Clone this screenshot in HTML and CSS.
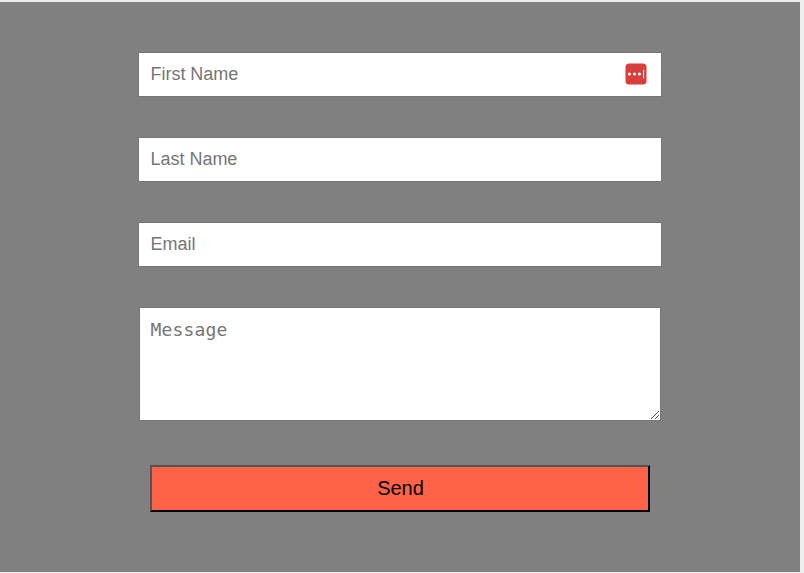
FILE: index.html
```html
<!DOCTYPE html>
<html lang="en">
<head>
  <meta charset="utf-8">
  <title>Contact</title>
  <link rel="stylesheet" href="styles.css">
</head>
<body>
  <form class="contact">
    <div class="field">
      <input class="input" type="text" placeholder="First Name">
      <svg class="badge" width="22" height="22" viewBox="0 0 22 22" aria-hidden="true">
        <rect x="0.5" y="0.5" width="21" height="21" rx="3.5" fill="#d93e3b"/>
        <circle cx="4.4" cy="11" r="1.6" fill="#fff"/>
        <circle cx="9.4" cy="11" r="1.6" fill="#fff"/>
        <circle cx="14.4" cy="11" r="1.6" fill="#fff"/>
        <rect x="18" y="6.8" width="1.1" height="8.6" rx="0.4" fill="#fff"/>
      </svg>
    </div>
    <input class="input" type="text" placeholder="Last Name">
    <input class="input" type="text" placeholder="Email">
    <div class="field-message">
      <textarea class="message" placeholder="Message"></textarea>
      <svg class="grip" width="10" height="10" viewBox="0 0 10 10" aria-hidden="true">
        <path d="M1 9 9 1M5 9 9 5" fill="none" stroke="#555" stroke-width="1"/>
      </svg>
    </div>
    <button class="send" type="button">Send</button>
  </form>
</body>
</html>
```
FILE: styles.css
```css
* {
  box-sizing: border-box;
}

body {
  margin: 0;
  padding-top: 2px;
  background: #eee;
  overflow: hidden;
}

.contact {
  display: flex;
  flex-direction: column;
  align-items: center;
  gap: 40px;
  width: 800px;
  height: 570px;
  padding-top: 50px;
  background: #808080;
}

.field {
  position: relative;
  height: 45px;
}

.input {
  display: block;
  width: 524px;
  height: 45px;
  padding: 0 11.5px;
  border: 1px solid #767676;
  background: #fff;
  font: 18px "Liberation Sans", Arial, sans-serif;
  letter-spacing: -0.02px;
}

.input::placeholder,
.message::placeholder {
  color: #757575;
}

.badge {
  position: absolute;
  top: 11px;
  right: 15px;
}

.field-message {
  position: relative;
}

.message {
  display: block;
  width: 522px;
  height: 114px;
  padding: 11px 10.5px;
  border: 1px solid #767676;
  background: #fff;
  font: 18px/21px "DejaVu Sans Mono", monospace;
  letter-spacing: 0.16px;
  resize: none;
}

.grip {
  position: absolute;
  right: 1px;
  bottom: 1px;
}

.send {
  width: 500px;
  height: 47px;
  margin-top: 4px;
  padding: 0 0 0 1px;
  border: 2px outset #000;
  background: tomato;
  color: #000;
  font: 20px "Liberation Sans", Arial, sans-serif;
}
```
